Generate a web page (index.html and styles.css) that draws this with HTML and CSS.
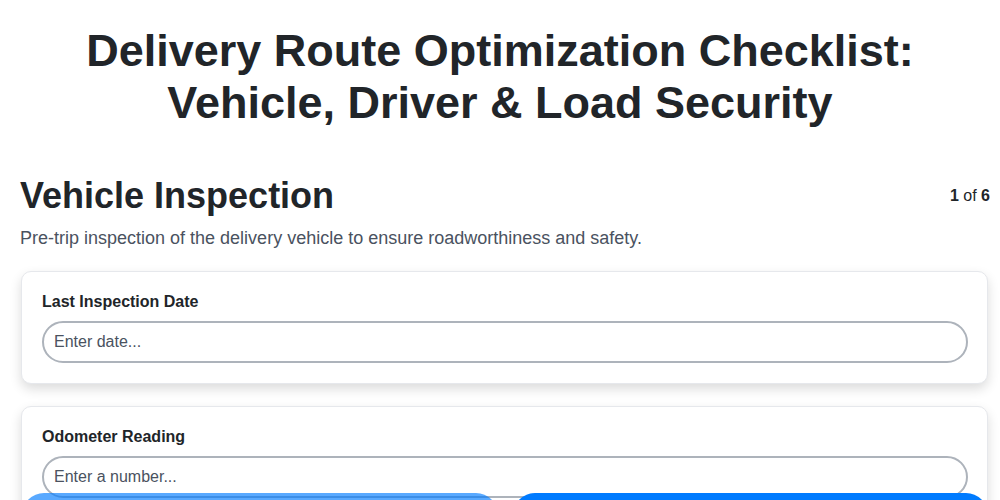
FILE: index.html
```html
<!DOCTYPE html>
<html lang="en">
<head>
<meta charset="utf-8">
<title>Delivery Route Optimization Checklist</title>
<link rel="stylesheet" href="styles.css">
</head>
<body>
<main class="page">
  <h1 class="title">Delivery Route Optimization Checklist: Vehicle, Driver &amp; Load Security</h1>
  <section class="step">
    <div class="step-head">
      <h2 class="step-title">Vehicle Inspection</h2>
      <div class="step-count"><b>1</b> of <b>6</b></div>
    </div>
    <p class="step-desc">Pre-trip inspection of the delivery vehicle to ensure roadworthiness and safety.</p>
    <div class="card">
      <label class="field-label" for="f1">Last Inspection Date</label>
      <input class="field-input" id="f1" type="text" placeholder="Enter date...">
    </div>
    <div class="card">
      <label class="field-label" for="f2">Odometer Reading</label>
      <input class="field-input" id="f2" type="text" placeholder="Enter a number...">
    </div>
  </section>
</main>
<nav class="nav">
  <button class="btn btn-prev" disabled>Previous</button>
  <button class="btn btn-next">Next</button>
</nav>
</body>
</html>
```

FILE: styles.css
```css
* { box-sizing: border-box; }
html, body { margin: 0; padding: 0; background: #fff; }
body {
  font-family: "Liberation Sans", Arial, sans-serif;
  color: #212529;
}
.page {
  padding: 0 10px 0 20px;
}
.title {
  margin: 25px 0 0;
  text-align: center;
  font-size: 45px;
  line-height: 52px;
  font-weight: 700;
  padding: 0 65px 0 55px;
}
.step { margin-top: 45px; }
.step-head {
  display: flex;
  justify-content: space-between;
  align-items: center;
}
.step-title {
  margin: 0;
  font-size: 36px;
  line-height: 44px;
  font-weight: 700;
}
.step-count {
  font-size: 16px;
  color: #212529;
}
.step-desc {
  margin: 8px 0 21px;
  font-size: 18px;
  line-height: 24px;
  color: #4a5260;
}
.card {
  margin: 0 2px 22px 1px;
  background: #fff;
  border: 1px solid #e6e8ec;
  border-radius: 10px;
  box-shadow: 0 5px 12px rgba(0,0,0,0.14);
  padding: 20px 19px 20px 20px;
}
.field-label {
  display: block;
  font-size: 16px;
  font-weight: 700;
  line-height: 20px;
  margin-bottom: 9px;
}
.field-input {
  display: block;
  width: 100%;
  height: 42px;
  border: 2px solid #adb3bb;
  border-radius: 21px;
  padding: 0 10px;
  font-family: inherit;
  font-size: 16px;
  color: #212529;
  background: #fff;
  outline: none;
}
.field-input::placeholder { color: #4a5260; opacity: 1; }
.nav {
  position: fixed;
  left: 22px;
  right: 12px;
  top: 493px;
  display: flex;
  gap: 15px;
}
.btn {
  flex: 1;
  height: 44px;
  border: none;
  border-radius: 22px;
  background: #007bff;
  color: #fff;
  font-family: inherit;
  font-size: 16px;
  font-weight: 700;
}
.btn-prev { opacity: 0.65; }
```
